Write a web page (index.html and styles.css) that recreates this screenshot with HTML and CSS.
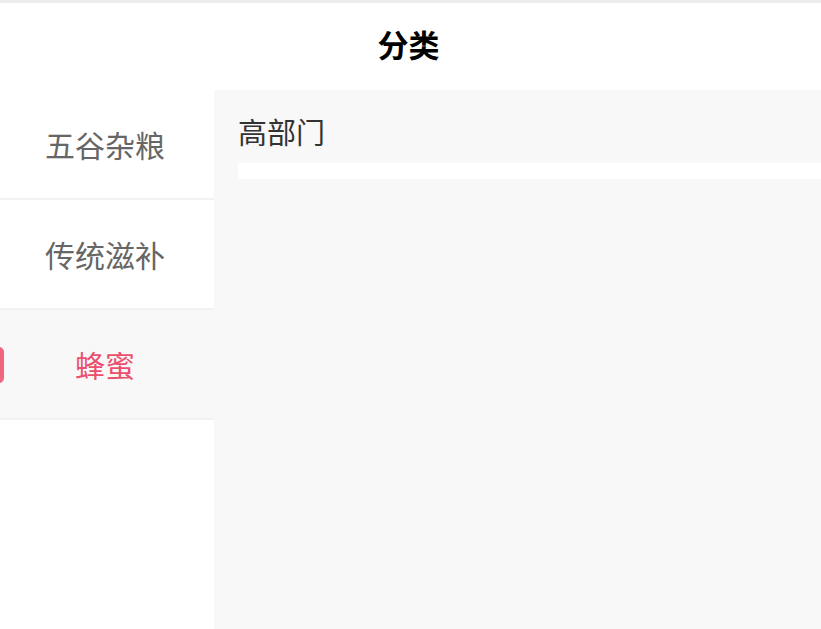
FILE: index.html
```html
<!DOCTYPE html>
<html lang="zh">
<head>
<meta charset="utf-8">
<link rel="stylesheet" href="styles.css">
</head>
<body>
<div class="page">
  <div class="topstrip"></div>
  <header class="header">分类</header>
  <div class="main">
    <nav class="sidebar">
      <div class="item">五谷杂粮</div>
      <div class="item">传统滋补</div>
      <div class="item active"><span class="indicator"></span>蜂蜜</div>
    </nav>
    <section class="content">
      <div class="content-title">高部门</div>
      <div class="content-bar"></div>
    </section>
  </div>
</div>
</body>
</html>
```
FILE: styles.css
```css
html, body {
  margin: 0;
  padding: 0;
  height: 100%;
  overflow: hidden;
}
body {
  font-family: "Noto Sans CJK SC", "Noto Sans", sans-serif;
  background: #ffffff;
}
.page {
  display: flex;
  flex-direction: column;
  height: 629px;
}
.topstrip {
  height: 3px;
  background: #ececec;
}
.header {
  height: 87px;
  display: flex;
  align-items: center;
  justify-content: center;
  font-size: 31px;
  font-weight: bold;
  color: #000;
  padding: 0 4px 6px 0;
  box-sizing: border-box;
}
.main {
  flex: 1;
  display: flex;
}
.sidebar {
  width: 214px;
  background: #fff;
  display: flex;
  flex-direction: column;
}
.item {
  position: relative;
  height: 108px;
  border-bottom: 2px solid #f2f2f2;
  display: flex;
  align-items: center;
  justify-content: center;
  font-size: 30px;
  color: #666;
  padding-right: 4px;
}
.item.active {
  background: #f8f8f8;
  color: #ea4f6e;
}
.indicator {
  position: absolute;
  left: -6px;
  top: 37px;
  width: 10px;
  height: 36px;
  border-radius: 5px;
  background: #f0667f;
}
.content {
  flex: 1;
  background: #f8f8f8;
  padding: 21px 0 0 24px;
  display: flex;
  flex-direction: column;
}
.content-title {
  font-size: 29px;
  line-height: 40px;
  color: #333;
}
.content-bar {
  margin-top: 12px;
  height: 16px;
  background: #ffffff;
}
```
